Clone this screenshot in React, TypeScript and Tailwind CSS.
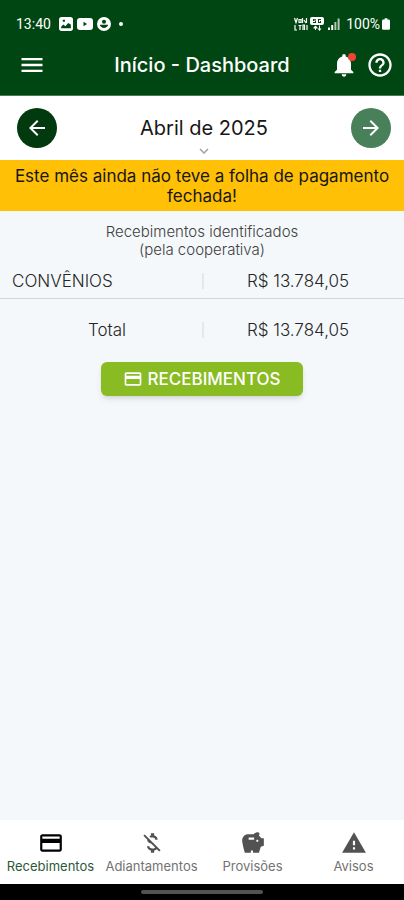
import React from "react";
import {
  MdArrowBack,
  MdArrowForward,
  MdCreditCard,
  MdHelpOutline,
  MdKeyboardArrowDown,
  MdMenu,
  MdMoneyOff,
  MdNotifications,
  MdSavings,
  MdWarning,
} from "react-icons/md";
import clsx from "clsx";

const StatusBar: React.FC = () => (
  <div className="flex h-8 items-center justify-between pt-4 pr-3.5 pl-4 text-sm leading-4">
    <div className="flex items-center gap-1">
      <span className="font-['Roboto',sans-serif]">13:40</span>
      {/* Gallery */}
      <svg viewBox="0 0 13 13" className="ml-1 size-3.5" fill="currentColor">
        <path fillRule="evenodd" d="M2.500 0h8A2.500 2.500 0 0 1 13 2.500v8a2.500 2.500 0 0 1-2.500 2.500h-8A2.500 2.500 0 0 1 0 10.500v-8A2.500 2.500 0 0 1 2.500 0ZM2 10.500h9V7L8.500 5.500 6 8.500 4 7 2 9Zm1.500-8v2h2v-2Z" />
      </svg>
      {/* YouTube */}
      <svg viewBox="0 0 16 12" className="h-3 w-4" fill="currentColor">
        <path fillRule="evenodd" d="M3 0h10a3 3 0 0 1 3 3v6a3 3 0 0 1-3 3H3a3 3 0 0 1-3-3V3a3 3 0 0 1 3-3Zm3.500 3.800v4.400L10 6Z" />
      </svg>
      {/* Account */}
      <svg viewBox="0 0 14 14" className="size-3.5" fill="currentColor">
        <path fillRule="evenodd" d="M7 0a7 7 0 1 1 0 14A7 7 0 0 1 7 0Zm0 2.800a2 2 0 1 0 0 4 2 2 0 0 0 0-4ZM2.800 7.800c.6 2 2.200 3.200 4.200 3.200s3.600-1.200 4.200-3.200Z" />
      </svg>
      <span className="ml-1 size-1 rounded-full bg-white" />
    </div>
    <div className="flex items-center gap-0.5">
      {/* VoLTE */}
      <svg viewBox="0 0 14 14" className="size-3.5" fill="none" stroke="currentColor" strokeWidth="1.2">
        <path d="M0.500 1l1.500 4.500L3.500 1M5 2.500h2v3H5zM8.500 1v5M10 3l2 3M12.500 1v5M1 8v5h2M4.500 8.500h3M6 8v5M9 13V8h1.500v5M13 8v5" />
      </svg>
      {/* 5G */}
      <svg viewBox="0 0 14 14" className="size-3.5" fill="currentColor">
        <path fillRule="evenodd" d="M2 0h10a2 2 0 0 1 2 2v4a2 2 0 0 1-2 2H2a2 2 0 0 1-2-2V2a2 2 0 0 1 2-2Zm1 2v2h2v1H3v1h3V3.500H4V2.800h2V2Zm5 0v4h3V4h-1v1H9V3h2V2Z" />
        <path d="M3.500 10.500l2-2 2 2v1H6v1.500H5v-1.500H3.500ZM7.500 11.500l2 2.500 2-2.500H10V8.500H9v3Z" />
      </svg>
      <svg viewBox="0 0 12 12" className="ml-0.5 size-3" fill="currentColor">
        <path d="M0 9.500h2V12H0zM3.200 7h2v5h-2z" />
        <path d="M6.400 4h2v8h-2zM9.600 0.500h2V12h-2z" opacity="0.7" />
      </svg>
      <span className="ml-1 font-['Roboto',sans-serif]">100%</span>
      <svg viewBox="0 0 9 13" className="h-3 w-2" fill="currentColor">
        <path d="M3 0h3v1.500h1.500A1.500 1.500 0 0 1 9 3v8.500A1.500 1.500 0 0 1 7.500 13h-6A1.500 1.500 0 0 1 0 11.500V3a1.500 1.500 0 0 1 1.500-1.500H3Z" />
      </svg>
    </div>
  </div>
);

interface AmountRowProps {
  label: string;
  value: string;
  centered?: boolean;
}

const AmountRow: React.FC<AmountRowProps> = ({ label, value, centered }) => (
  <div className="flex items-center text-[17px] leading-5 font-light text-neutral-800">
    <dt className={clsx("w-1/2 pl-3", centered && "text-center")}>{label}</dt>
    <dd className="flex w-1/2 items-center">
      <span className="h-4 w-0.5 bg-gray-200" />
      <span className="flex-1 pr-3 text-center">{value}</span>
    </dd>
  </div>
);

interface NavItemProps {
  href: string;
  icon: React.ReactNode;
  label: string;
  isActive?: boolean;
}

const NavItem: React.FC<NavItemProps> = ({ href, icon, label, isActive }) => (
  <a
    href={href}
    aria-current={isActive ? "page" : undefined}
    className={clsx(
      "flex flex-1 flex-col items-center gap-0.5",
      isActive ? "text-[#2a5a38]" : "text-neutral-500"
    )}
  >
    <span className={isActive ? "text-black" : "text-neutral-600"}>{icon}</span>
    <span className="text-[13px] leading-4">{label}</span>
  </a>
);

const navItems = [
  { href: "#recebimentos", icon: <MdCreditCard className="size-6.5" />, label: "Recebimentos", isActive: true },
  { href: "#adiantamentos", icon: <MdMoneyOff className="size-6.5" />, label: "Adiantamentos" },
  { href: "#provisoes", icon: <MdSavings className="size-6.5" />, label: "Provisões" },
  { href: "#avisos", icon: <MdWarning className="size-6.5" />, label: "Avisos" },
];

export default function App() {
  return (
    <div className="flex min-h-screen flex-col bg-[#f4f8fb] font-['Inter',sans-serif]">
      <header className="bg-[#004612] text-white">
        <StatusBar />
        <div className="grid h-16 grid-cols-[72px_1fr_72px] items-center border-b border-[#4a7a52] px-2.5 pt-0.5">
          <button aria-label="Menu" className="justify-self-start px-2">
            <MdMenu className="size-7" />
          </button>
          <h1 className="text-center text-xl font-medium whitespace-nowrap">Início - Dashboard</h1>
          <div className="flex justify-end gap-2">
            <button aria-label="Notificações" className="relative">
              <MdNotifications className="size-7" />
              <span className="absolute top-0.5 right-0.5 size-2 rounded-full bg-[#f44336]" />
            </button>
            <button aria-label="Ajuda">
              <MdHelpOutline className="size-7" />
            </button>
          </div>
        </div>
      </header>

      <section className="flex h-16 items-center justify-between bg-white pr-[13px] pl-[17px]">
        <button aria-label="Mês anterior" className="flex size-10 items-center justify-center rounded-full bg-[#003a0e] text-white">
          <MdArrowBack className="size-6" />
        </button>
        <button className="flex flex-col items-center self-end text-xl leading-6 text-neutral-900">
          Abril de 2025
          <MdKeyboardArrowDown className="mt-0.5 size-4.5 text-neutral-400" />
        </button>
        <button aria-label="Próximo mês" className="flex size-10 items-center justify-center rounded-full bg-[#48805a] text-white">
          <MdArrowForward className="size-6" />
        </button>
      </section>

      <p className="bg-[#ffc005] px-3 pt-1.5 pb-[5px] text-center text-[17px] leading-5 text-neutral-900">
        Este mês ainda não teve a folha de pagamento fechada!
      </p>

      <main className="flex flex-1 flex-col pt-3">
        <h2 className="text-center text-[15px] leading-[18px] font-light text-neutral-700">
          Recebimentos identificados
          <br />
          (pela cooperativa)
        </h2>
        <dl>
          <div className="border-b border-gray-300 pt-3 pb-[7px]">
            <AmountRow label="CONVÊNIOS" value="R$ 13.784,05" />
          </div>
          <div className="pt-[21px]">
            <AmountRow label="Total" value="R$ 13.784,05" centered />
          </div>
        </dl>
        <button className="mx-auto mt-5.5 flex items-center gap-1 rounded-md bg-[#89bb22] px-5.5 py-1 text-[17px] leading-6.5 font-medium text-white shadow-md">
          <MdCreditCard className="size-5" />
          RECEBIMENTOS
        </button>
      </main>

      <nav className="flex h-16 bg-white pt-2.5">
        {navItems.map((item) => (
          <NavItem key={item.href} {...item} />
        ))}
      </nav>
      <div className="flex h-4 items-center justify-center bg-black">
        <span className="h-1 w-[30%] rounded-full bg-neutral-600" />
      </div>
    </div>
  );
}
